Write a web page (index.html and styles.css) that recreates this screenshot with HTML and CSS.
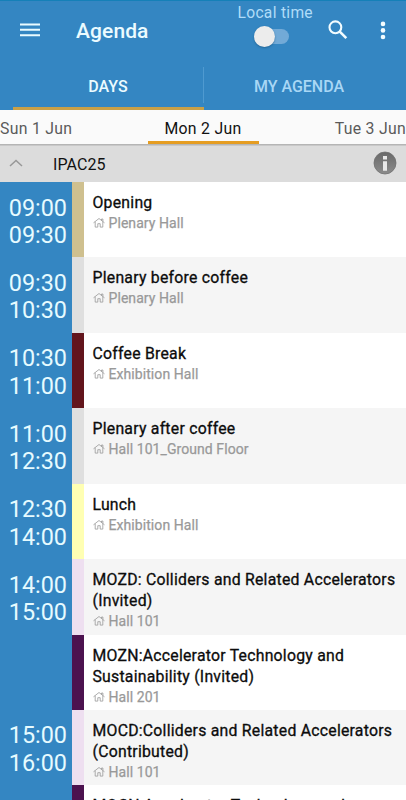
FILE: index.html
```html
<!DOCTYPE html>
<html lang="en">
<head>
<meta charset="utf-8">
<title>Agenda</title>
<link rel="stylesheet" href="styles.css">
</head>
<body>
<svg width="0" height="0" class="defs"><symbol id="house" viewBox="0 0 12 12"><path d="M.5 5.8 6 1.5l5.5 4.3M2.2 4.7v5.4h2.6V6.7h2.4v3.4h2.6V4.7M8.5 3.3V2h1.4v2.4" fill="none" stroke="#989898" stroke-width=".8"/></symbol></svg>
<header class="header">
  <div class="toolbar">
    <svg class="menu" width="20" height="16" viewBox="0 0 20 16"><path d="M0 2.4h20M0 7.8h20M0 13.2h20" stroke="#e9fbff" stroke-width="2"/></svg>
    <h1>Agenda</h1>
    <div class="local"><span>Local time</span><div class="switch"><i></i></div></div>
    <svg class="search" width="20" height="20" viewBox="0 0 20 20"><circle cx="7.4" cy="7.3" r="5.9" fill="none" stroke="#f2fcff" stroke-width="2.1"/><path d="m11.5 11.4 6.8 6.8" stroke="#f2fcff" stroke-width="2.6"/></svg>
    <svg class="more" width="6" height="20" viewBox="0 0 6 20"><g fill="#f2fcff"><circle cx="3" cy="3.9" r="2.3"/><circle cx="3" cy="10.4" r="2.3"/><circle cx="3" cy="17" r="2.3"/></g></svg>
  </div>
  <nav class="tabs"><div class="tab active">DAYS</div><div class="tab">MY AGENDA</div></nav>
</header>
<nav class="dates"><span>Sun 1 Jun</span><span class="current">Mon 2 Jun</span><span class="next">Tue 3 Jun</span></nav>
<div class="group">
  <svg class="chevron" width="14" height="8" viewBox="0 0 14 8"><path d="m1 7 6-5.5L13 7" fill="none" stroke="#989898" stroke-width="1.5"/></svg>
  <span>IPAC25</span>
  <svg class="info" width="24" height="24" viewBox="0 0 24 24"><defs><linearGradient id="g" x2="0" y2="1"><stop stop-color="#686868"/><stop offset="1" stop-color="#8c8c8c"/></linearGradient></defs><circle cx="12" cy="12" r="11" fill="url(#g)" stroke="#707070" stroke-width=".8"/><path d="M10 5h4v3.6h-4zM10 10.2h4v9.6h-4z" fill="#e9e9e9"/></svg>
</div>
<main class="list">
  <article class="row"><div class="time">09:00<br>09:30</div><div class="bar sand"></div><div class="body"><h2>Opening</h2><p><svg><use href="#house"/></svg>Plenary Hall</p></div></article>
  <article class="row"><div class="time">09:30<br>10:30</div><div class="bar grey"></div><div class="body"><h2>Plenary before coffee</h2><p><svg><use href="#house"/></svg>Plenary Hall</p></div></article>
  <article class="row"><div class="time">10:30<br>11:00</div><div class="bar maroon"></div><div class="body"><h2>Coffee Break</h2><p><svg><use href="#house"/></svg>Exhibition Hall</p></div></article>
  <article class="row"><div class="time">11:00<br>12:30</div><div class="bar grey"></div><div class="body"><h2>Plenary after coffee</h2><p><svg><use href="#house"/></svg>Hall 101_Ground Floor</p></div></article>
  <article class="row"><div class="time">12:30<br>14:00</div><div class="bar yellow"></div><div class="body"><h2>Lunch</h2><p><svg><use href="#house"/></svg>Exhibition Hall</p></div></article>
  <article class="row"><div class="time">14:00<br>15:00</div><div class="bar pink"></div><div class="body"><h2>MOZD: Colliders and Related Accelerators<br>(Invited)</h2><p><svg><use href="#house"/></svg>Hall 101</p></div></article>
  <article class="row"><div class="time"></div><div class="bar purple"></div><div class="body"><h2>MOZN:Accelerator Technology and<br>Sustainability (Invited)</h2><p><svg><use href="#house"/></svg>Hall 201</p></div></article>
  <article class="row"><div class="time">15:00<br>16:00</div><div class="bar pink"></div><div class="body"><h2>MOCD:Colliders and Related Accelerators<br>(Contributed)</h2><p><svg><use href="#house"/></svg>Hall 101</p></div></article>
  <article class="row"><div class="time"></div><div class="bar purple"></div><div class="body"><h2>MOCN:Accelerator Technology and</h2></div></article>
</main>
</body>
</html>
```
FILE: styles.css
```css
* { box-sizing: border-box; }
html, body { margin: 0; height: 800px; overflow: hidden; }
body { width: 406px; font-family: Roboto, "Liberation Sans", sans-serif; background: #fff; display: flex; flex-direction: column; }
h1, h2, p { margin: 0; font-weight: 500; }
.defs { position: absolute; }
.header { height: 110px; flex: none; background: #3486c2; border-top: 1px solid #1580b8; }
.toolbar { height: 63px; display: flex; align-items: flex-start; padding-left: 20px; }
.menu { margin-top: 21px; }
h1 { width: 161.5px; margin: 18px 0 0 36px; font-size: 21px; line-height: 25px; letter-spacing: .1px; color: #ebfbff; white-space: nowrap; }
.local { width: 78px; font-size: 15.6px; line-height: 18px; color: #b0dcf8; letter-spacing: .3px; white-space: nowrap; padding-top: 3px; }
.switch { width: 31px; height: 15px; margin: 7px 0 0 20.5px; border-radius: 8px; background: #72aad7; }
.switch i { display: block; width: 21px; height: 21px; border-radius: 50%; background: #ececec; box-shadow: 0 1px 2px #17517b99; transform: translate(-4px, -3px); }
.search { margin: 19px 0 0 12.5px; }
.more { margin: 19px 0 0 32px; }
.tabs { height: 46px; display: flex; padding-left: 12.5px; }
.tab { width: 191px; text-align: center; font-size: 16px; line-height: 45px; font-weight: 500; color: #a9d7f5; white-space: nowrap; }
.tab.active { color: #ebfbff; border-bottom: 3px solid #c9a047; background: linear-gradient(#4f9ad0, #4f9ad0) right 3px / 1px 36px no-repeat; }
.dates { height: 35px; flex: none; display: flex; justify-content: space-between; background: #fafafa; border-bottom: 1px solid #b5b5b5; color: #5a5a5a; font-size: 15.8px; letter-spacing: .3px; line-height: 37px; white-space: nowrap; }
.dates span { width: 100px; }
.dates .current { width: 111px; text-align: center; color: #111; border-bottom: 3px solid #e59d22; }
.dates .next { text-align: right; }
.group { height: 37px; flex: none; display: flex; align-items: center; padding: 0 9px; background: #dcdcdc; border-top: 1px solid #c8c8c8; color: #111; font-size: 16px; letter-spacing: .1px; }
.chevron { margin-right: 30px; transform: translateY(-1px); }
.info { margin-left: auto; transform: translateY(-1px); }
.list { height: 618px; flex: none; overflow: hidden; }
.row { height: 75.43px; display: flex; background: #fff; }
.row:nth-child(even) { background: #f5f5f5; }
.time { width: 72px; padding: 12.5px 5px 0 0; background: #3486c2; color: #e6fbff; text-align: right; font-size: 23.4px; line-height: 27.5px; white-space: nowrap; }
.bar { width: 12px; }
.sand { background: #cfc08f; }
.grey { background: #dfdfdf; }
.maroon { background: #62151c; }
.yellow { background: #ffffb3; }
.pink { background: #eedff0; }
.purple { background: #4c124f; }
.body { flex: 1; padding: 10px 0 0 8.5px; white-space: nowrap; }
.body h2 { font-size: 15.8px; font-weight: 400; -webkit-text-stroke: .3px #0c0c0c; letter-spacing: .24px; line-height: 21px; color: #0c0c0c; }
.body p { display: flex; align-items: center; font-size: 14px; font-weight: 400; -webkit-text-stroke: .25px #999; letter-spacing: .07px; line-height: 20px; color: #999; }
.body p svg { width: 12px; height: 12px; margin-right: 4px; }
```
